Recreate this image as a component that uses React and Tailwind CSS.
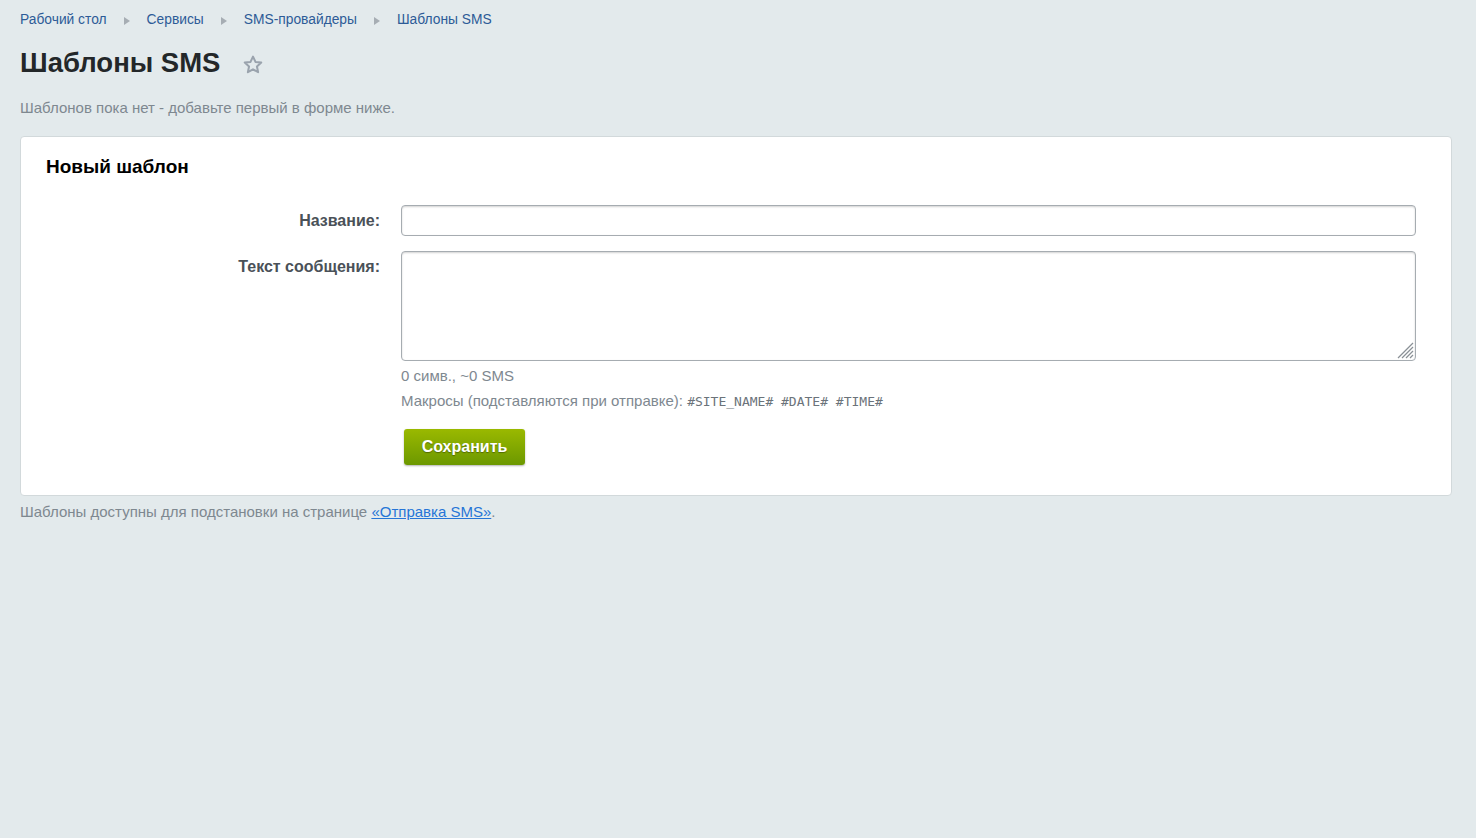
import React from "react";

function Crumb({ children, last }) {
  return (
    <>
      <a href="#" className="text-[#2d5b97] hover:underline">{children}</a>
      {!last && (
        <svg width="6" height="8" viewBox="0 0 6 8" className="mx-[17px] mt-[1px]">
          <path d="M0 0 L6 4 L0 8 Z" fill="#a6adb3" />
        </svg>
      )}
    </>
  );
}

export default function App() {
  return (
    <div
      className="min-h-[838px] w-full bg-[#e3eaec] pl-5 pr-6 pt-[10px] text-[15px]"
      style={{ fontFamily: '"Liberation Sans", Arial, sans-serif' }}
    >
      {/* breadcrumbs */}
      <nav className="flex items-center mt-[1px] h-[18px] leading-[18px] text-[13.8px]">
        <Crumb>Рабочий стол</Crumb>
        <Crumb>Сервисы</Crumb>
        <Crumb>SMS-провайдеры</Crumb>
        <Crumb last>Шаблоны SMS</Crumb>
      </nav>

      {/* page title */}
      <div className="flex items-center mt-[17px] h-[34px]">
        <h1 className="text-[27.5px] font-bold text-[#232729] leading-[34px]">Шаблоны SMS</h1>
        <svg width="22" height="22" viewBox="0 0 24 24" className="ml-[22px] mt-[3px]">
          <path
            d="M12 2.8 L14.7 8.6 L21 9.3 L16.3 13.6 L17.6 19.9 L12 16.7 L6.4 19.9 L7.7 13.6 L3 9.3 L9.3 8.6 Z"
            fill="none"
            stroke="#9aa3ad"
            strokeWidth="2.2"
            strokeLinejoin="round"
          />
        </svg>
      </div>

      <p className="mt-[19px] text-[#7e8890] leading-[18px]">
        Шаблонов пока нет - добавьте первый в форме ниже.
      </p>

      {/* form card */}
      <div className="mt-[19px] bg-white border border-[#d2d9db] rounded-[4px] pl-[25px] pr-[35px] pt-[19px] pb-[30px]">
        <h2 className="text-[19px] font-bold text-black leading-[22px]">Новый шаблон</h2>

        <div className="mt-[27px] grid grid-cols-[334px_1fr] gap-x-[21px]">
          <label className="text-right font-bold text-[16px] text-[#4a5158] leading-[31px]">Название:</label>
          <input
            type="text"
            className="h-[31px] w-full rounded-[4px] border border-[#a6acb1] bg-white shadow-[inset_0_1px_2px_rgba(0,0,0,0.18)] outline-none px-2"
          />

          <label className="mt-[15px] text-right font-bold text-[16px] text-[#4a5158] leading-[31px]">
            Текст сообщения:
          </label>
          <div className="mt-[15px]">
            <div className="relative">
              <textarea className="block h-[110px] w-full rounded-[4px] border border-[#a6acb1] bg-white shadow-[inset_0_1px_2px_rgba(0,0,0,0.18)] outline-none px-2 resize-none" />
              {/* resize grip */}
              <svg
                width="17"
                height="17"
                viewBox="0 0 17 17"
                className="absolute right-[2px] bottom-[2px] pointer-events-none"
              >
                <g stroke="#8a9096" strokeWidth="1.3">
                  <line x1="1" y1="16" x2="16" y2="1" />
                  <line x1="5" y1="16" x2="16" y2="5" />
                  <line x1="9" y1="16" x2="16" y2="9" />
                  <line x1="13" y1="16" x2="16" y2="13" />
                </g>
              </svg>
            </div>
            <div className="mt-[6px] text-[#7e8890] leading-[18px]">0 симв., ~0 SMS</div>
            <div className="mt-[7px] text-[#7e8890] leading-[18px]">
              Макросы (подставляются при отправке):{" "}
              <span className="text-[13px] text-[#6b737a]" style={{ fontFamily: '"DejaVu Sans Mono", monospace' }}>
                #SITE_NAME# #DATE# #TIME#
              </span>
            </div>
            <button
              className="mt-[18px] ml-[3px] h-[36px] w-[121px] rounded-[3px] bg-gradient-to-b from-[#9ab900] to-[#6c9800] text-white font-bold text-[16px] shadow-[0_1px_2px_rgba(0,0,0,0.3)] [text-shadow:0_1px_1px_rgba(0,0,0,0.35)]"
            >
              Сохранить
            </button>
          </div>
        </div>
      </div>

      <p className="mt-[7px] text-[#7e8890] leading-[18px]">
        Шаблоны доступны для подстановки на странице{" "}
        <a href="#" className="text-[#2675d7] underline">«Отправка SMS»</a>.
      </p>
    </div>
  );
}
